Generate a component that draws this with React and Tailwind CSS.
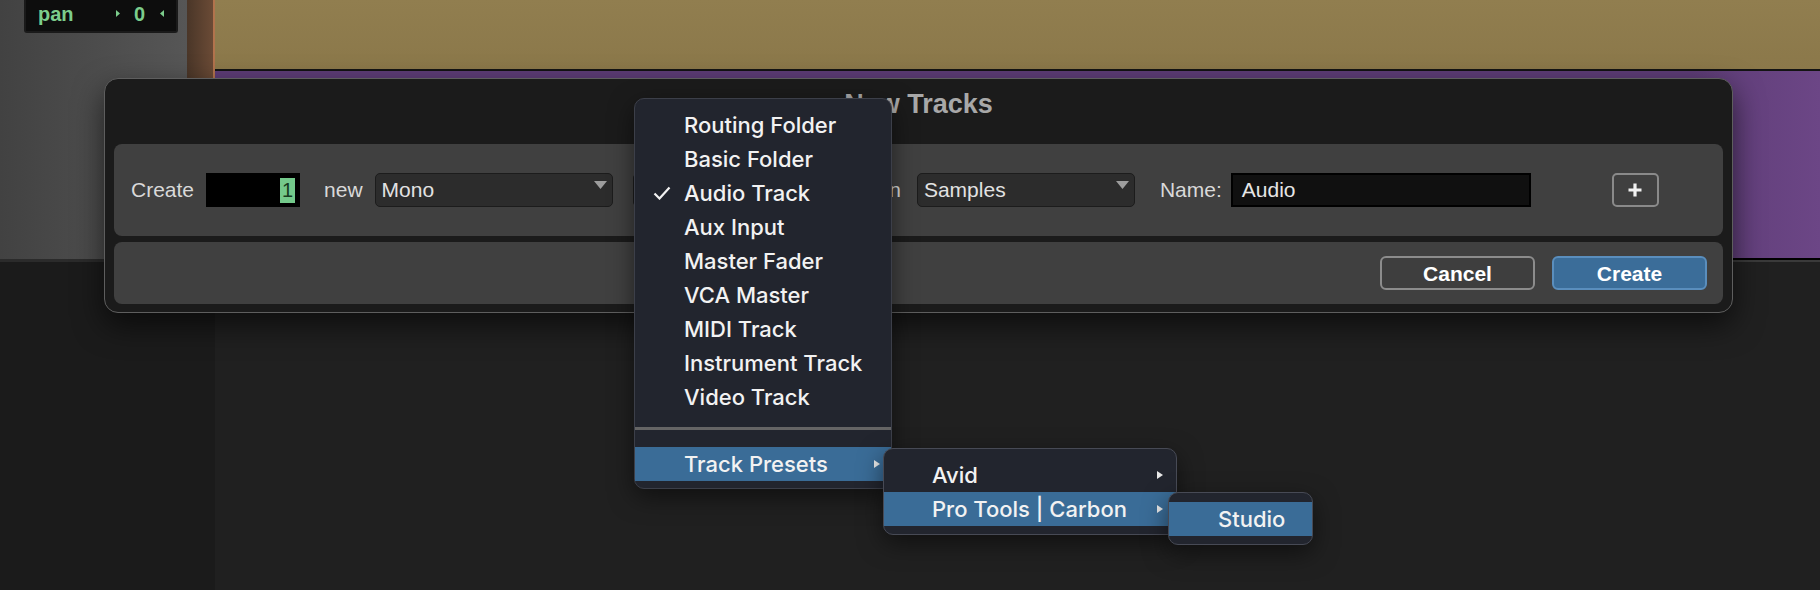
import React from 'react';

const menuItems = [
  'Routing Folder',
  'Basic Folder',
  'Audio Track',
  'Aux Input',
  'Master Fader',
  'VCA Master',
  'MIDI Track',
  'Instrument Track',
  'Video Track',
];

const DownArrow = () => (
  <svg width="13" height="8" viewBox="0 0 13 8" className="self-start mt-[7px] mr-[5px] shrink-0 ml-auto">
    <polygon points="0,0 13,0 6.5,8" fill="#9d9d9d" />
  </svg>
);

const RightArrow = ({ className = '' }) => (
  <svg width="6" height="8" viewBox="0 0 6 8" className={className}>
    <polygon points="0,0 6,4 0,8" fill="#e8e8e8" />
  </svg>
);

const Dropdown = ({ label, width }) => (
  <div className={`${width} h-[34px] flex items-center bg-[#2c2c2c] border border-[#1c1c1c] rounded-[5px] pl-[6px]`}>
    {label && <span className="flex-1 text-[21px] text-[#e2e2e2]">{label}</span>}
    <DownArrow />
  </div>
);

const App = () => {
  return (
    <div className="relative w-[1820px] h-[590px] overflow-hidden bg-[#202020] font-['Liberation_Sans',Arial,sans-serif]">
      {/* Edit window behind the dialog */}
      <div className="flex h-[262px]">
        <div className="w-[187px] bg-linear-to-r from-[#424242] to-[#565656] border-b-[3px] border-[#2b2b2b]">
          <div className="ml-[24px] w-[154px] h-[33px] bg-[#0d0d0d] rounded-b-[3px] border-x-2 border-b-2 border-[#1a1a1a] flex items-center px-[12px]">
            <span className="text-[20px] font-bold text-[#7ccd8c] leading-none -mt-[4px]">pan</span>
            <span className="flex-1" />
            <svg width="4" height="7" viewBox="0 0 4 7" className="-mt-[4px]">
              <polygon points="0,0 4,3.5 0,7" fill="#7ccd8c" />
            </svg>
            <span className="ml-[14px] text-[20px] font-bold text-[#7ccd8c] leading-none -mt-[4px]">0</span>
            <svg width="4" height="7" viewBox="0 0 4 7" className="ml-[15px] -mt-[4px]">
              <polygon points="4,0 0,3.5 4,7" fill="#7ccd8c" />
            </svg>
          </div>
        </div>
        <div className="w-[28px] bg-linear-to-r from-[#4a3628] to-[#6b4b36] border-r-2 border-[#b2734d]" />
        <div className="flex-1 flex flex-col">
          <div className="h-[69px] bg-linear-to-b from-[#917e4f] to-[#8b784a]" />
          <div className="h-[2px] bg-[#141414]" />
          <div className="flex-1 bg-linear-to-r from-[#5e3d77] from-92% to-[#6c4686]" />
          <div className="h-[2px] bg-black" />
          <div className="h-[2px] bg-[#3a3a3a]" />
        </div>
      </div>
      <div className="flex h-[328px]">
        <div className="w-[215px] bg-[#1b1b1b]" />
        <div className="flex-1 bg-[#202020]" />
      </div>

      {/* New Tracks dialog */}
      <div className="absolute left-[104px] top-[78px] w-[1629px] h-[235px] bg-[#1b1b1b] border border-[#5e5e5e] rounded-[14px] px-[9px] pb-[8px] flex flex-col shadow-[0_12px_30px_rgba(0,0,0,0.6)]">
        <div className="h-[65px] flex justify-center pt-[10px]">
          <span className="text-[27px] font-bold text-[#a8a8a8] leading-[30px]">New Tracks</span>
        </div>
        <div className="h-[92px] bg-[#404040] rounded-[8px] flex items-center">
          <span className="ml-[17px] text-[21px] text-[#d9d9d9]">Create</span>
          <div className="ml-[12px] w-[94px] h-[34px] bg-black flex items-center justify-end pr-[5px]">
            <span className="w-[15px] h-[25px] bg-[#74c98b] text-[20px] leading-[25px] text-[#163b20] text-center">1</span>
          </div>
          <span className="ml-[24px] text-[21px] text-[#d9d9d9]">new</span>
          <div className="ml-[12px]">
            <Dropdown label="Mono" width="w-[238px]" />
          </div>
          <div className="ml-[20px]">
            <Dropdown label="" width="w-[239px]" />
          </div>
          <span className="ml-[13px] text-[21px] text-[#d9d9d9]">in</span>
          <div className="ml-[16px]">
            <Dropdown label="Samples" width="w-[218px]" />
          </div>
          <span className="ml-[25px] text-[21px] text-[#d9d9d9]">Name:</span>
          <div className="ml-[9px] w-[300px] h-[34px] bg-[#101010] border-2 border-black flex items-center pl-[9px]">
            <span className="text-[21px] text-[#e6e6e6]">Audio</span>
          </div>
          <button className="ml-[81px] w-[47px] h-[34px] border-2 border-[#8a8a8a] rounded-[5px] flex items-center justify-center">
            <svg width="16" height="16" viewBox="0 0 16 16">
              <path d="M8 1.5v13M1.5 8h13" stroke="#f2f2f2" strokeWidth="3.2" />
            </svg>
          </button>
        </div>
        <div className="mt-[6px] flex-1 bg-[#404040] rounded-[8px] flex items-center justify-end pr-[16px] gap-[17px]">
          <button className="w-[155px] h-[34px] bg-[#3e3e3e] border-2 border-[#8c8c8c] rounded-[6px] text-[21px] font-bold text-white">
            Cancel
          </button>
          <button className="w-[155px] h-[34px] bg-[#3b6d99] border-2 border-[#5a8ebd] rounded-[6px] text-[21px] font-bold text-white">
            Create
          </button>
        </div>
      </div>

      {/* Track type popup menu */}
      <div className="absolute left-[634px] top-[98px] w-[258px] bg-[#22252e] border border-[#3c3f49] rounded-[10px] pt-[9px] pb-[7px] font-['Inter',sans-serif] text-[22px] font-medium text-[#f2f2f2] shadow-[0_8px_24px_rgba(0,0,0,0.5)]">
        {menuItems.map((item) => (
          <div key={item} className="h-[34px] flex items-center pl-[18px]">
            <span className="w-[31px] flex">
              {item === 'Audio Track' && (
                <svg width="18" height="14" viewBox="0 0 18 14">
                  <path d="M1.5 7.5l5 5L16.5 1.5" stroke="#f2f2f2" strokeWidth="2.2" fill="none" />
                </svg>
              )}
            </span>
            <span>{item}</span>
          </div>
        ))}
        <div className="mt-[13px] h-[3px] bg-[#656565]" />
        <div className="mt-[17px] h-[34px] flex items-center pl-[49px] pr-[11px] bg-[#3a6c97]">
          <span className="flex-1">Track Presets</span>
          <RightArrow />
        </div>
      </div>

      {/* Track Presets submenu */}
      <div className="absolute left-[883px] top-[448px] w-[294px] bg-[#22252e] border border-[#474a55] rounded-[10px] pt-[9px] pb-[8px] font-['Inter',sans-serif] text-[22px] font-medium text-[#f2f2f2] shadow-[0_8px_24px_rgba(0,0,0,0.5)]">
        <div className="h-[34px] flex items-center pl-[48px] pr-[13px]">
          <span className="flex-1">Avid</span>
          <RightArrow />
        </div>
        <div className="h-[34px] flex items-center pl-[48px] pr-[13px] bg-[#3a6c97]">
          <span className="flex-1">Pro Tools | Carbon</span>
          <RightArrow />
        </div>
      </div>

      {/* Pro Tools | Carbon submenu */}
      <div className="absolute left-[1168px] top-[492px] w-[145px] bg-[#22252e] border border-[#474a55] rounded-[10px] pt-[9px] pb-[8px] font-['Inter',sans-serif] text-[22px] font-medium text-[#f2f2f2] shadow-[0_8px_24px_rgba(0,0,0,0.5)]">
        <div className="h-[34px] flex items-center pl-[49px] bg-[#3a6c97]">
          <span>Studio</span>
        </div>
      </div>
    </div>
  );
};

export default App;
